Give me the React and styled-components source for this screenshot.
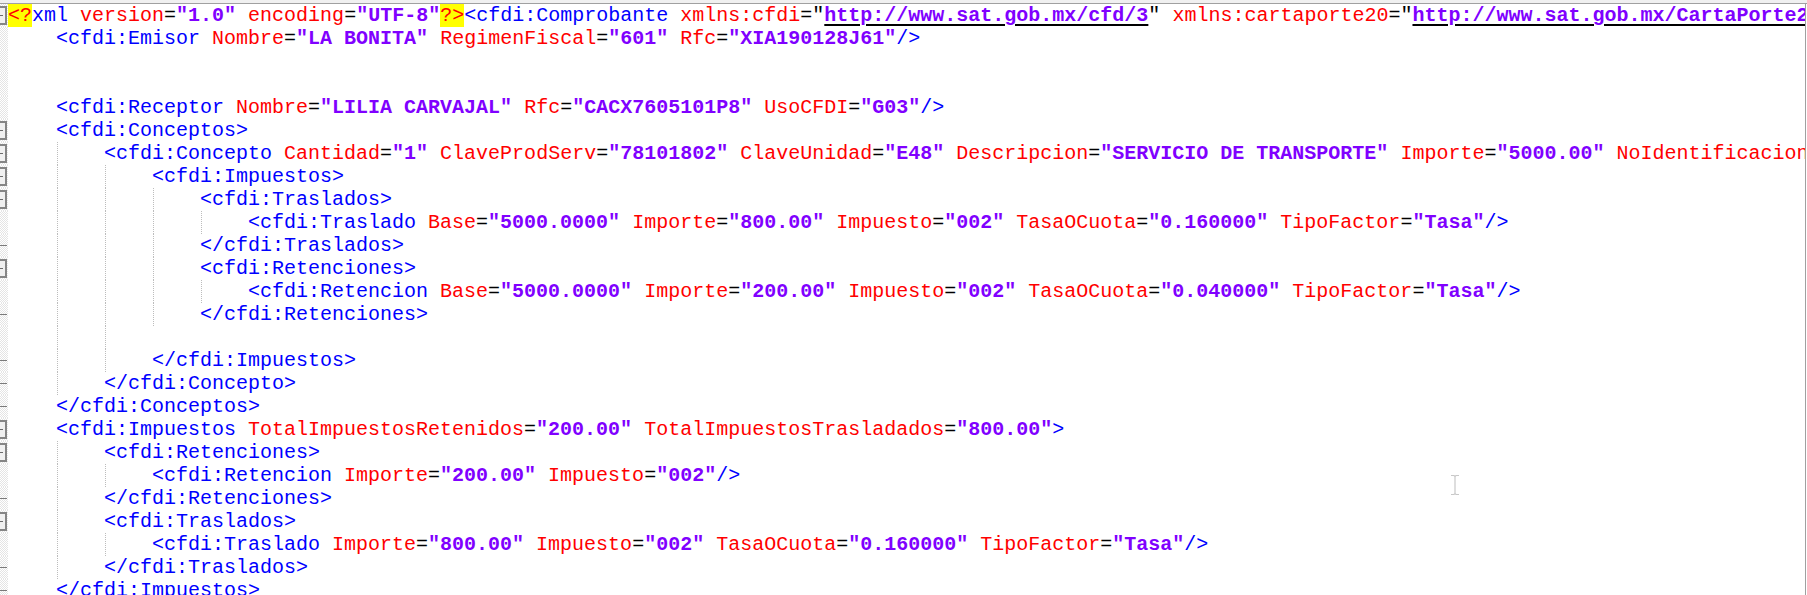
import React from "react";
import styled, { createGlobalStyle } from "styled-components";

const Global = createGlobalStyle`
  html, body { margin: 0; padding: 0; background: #ffffff; overflow: hidden; }
  body { width: 1807px; height: 595px; }
`;

const Window = styled.div`
  position: relative;
  width: 1807px;
  height: 595px;
  overflow: hidden;
  background: #ffffff;
  display: flex;
  flex-direction: column;
`;

const TopEdge = styled.div`
  height: 3px;
  flex: none;
  background: #f0f0f0;
  border-bottom: 1px solid #a0a0a0;
`;

const Editor = styled.div`
  flex: 1;
  width: 1806px;
  box-sizing: border-box;
  border-right: 1px solid #a0a0a0;
  overflow: hidden;
  display: flex;
  flex-direction: column;
`;

const Row = styled.div`
  display: flex;
  height: 23px;
  flex: none;
`;

const FoldCell = styled.div`
  position: relative;
  width: 8px;
  flex: none;
  overflow: hidden;
  background: repeating-conic-gradient(#e4e4e4 0% 25%, #ffffff 0% 50%) 0 0 / 2px 2px;
`;

const FoldBox = styled.div`
  position: absolute;
  left: -5px;
  top: 2px;
  width: 12px;
  height: 19px;
  box-sizing: border-box;
  border: 2px solid #858585;
  background: #f0f0f0;
  &::after {
    content: "";
    position: absolute;
    left: 0;
    right: 2px;
    top: 7px;
    height: 1px;
    background: #6a6a6a;
  }
`;

const FoldEnd = styled.div`
  position: absolute;
  left: 0;
  width: 7px;
  top: 11px;
  height: 1px;
  background: #7a7a7a;
`;

const Code = styled.div`
  flex: 1;
  overflow: hidden;
  white-space: pre;
  font-family: "Liberation Mono", "Courier New", monospace;
  font-size: 20px;
  line-height: 23px;
  color: #000000;
`;

const IndentUnit = styled.span`
  display: inline-block;
  width: 48px;
  height: 23px;
  vertical-align: top;
  background: ${(p) =>
    p.$guide
      ? "repeating-linear-gradient(to bottom, #bcbcbc 0 1px, transparent 1px 2px) 1px 0 / 1px 100% no-repeat"
      : "none"};
`;

const Tok = styled.span`
  color: ${(p) =>
    ({ tag: "#0000ff", attr: "#ff0000", eq: "#000000", val: "#8000ff", pi: "#ff0000", url: "#8000ff", q: "#000000" }[p.$t] ||
    "#000000")};
  font-weight: ${(p) => (p.$t === "val" || p.$t === "url" ? 700 : 400)};
  background: ${(p) => (p.$t === "pi" ? "#ffff00" : "transparent")};
  text-decoration: ${(p) => (p.$t === "url" ? "underline" : "none")};
  text-decoration-color: #000000;
  text-underline-offset: 3px;
  display: ${(p) => (p.$t === "pi" ? "inline-block" : "inline")};
  height: ${(p) => (p.$t === "pi" ? "23px" : "auto")};
  vertical-align: top;
`;

const Cursor = styled.svg`
  position: absolute;
  left: 1448px;
  top: 474px;
  pointer-events: none;
`;

// token helpers
const T = (t) => ["tag", t];
const A = (name, value) => [
  ["sp", " "],
  ["attr", name],
  ["eq", "="],
  ["val", `"${value}"`],
];
const U = (name, url) => [
  ["sp", " "],
  ["attr", name],
  ["eq", "="],
  ["q", '"'],
  ["url", url],
  ["q", '"'],
];

const lines = [
  {
    indent: 0, guides: [], fold: "box",
    toks: [
      ["pi", "<?"], T("xml"), ...A("version", "1.0"), ...A("encoding", "UTF-8"), ["pi", "?>"],
      T("<cfdi:Comprobante"), ...U("xmlns:cfdi", "http://www.sat.gob.mx/cfd/3"),
      ...U("xmlns:cartaporte20", "http://www.sat.gob.mx/CartaPorte20"),
      ...U("xmlns:xsi", "http://www.w3.org/2001/XMLSchema-instance"),
    ],
  },
  { indent: 1, guides: [], toks: [T("<cfdi:Emisor"), ...A("Nombre", "LA BONITA"), ...A("RegimenFiscal", "601"), ...A("Rfc", "XIA190128J61"), T("/>")] },
  { indent: 0, guides: [], toks: [] },
  { indent: 0, guides: [], toks: [] },
  { indent: 1, guides: [], toks: [T("<cfdi:Receptor"), ...A("Nombre", "LILIA CARVAJAL"), ...A("Rfc", "CACX7605101P8"), ...A("UsoCFDI", "G03"), T("/>")] },
  { indent: 1, guides: [], fold: "box", toks: [T("<cfdi:Conceptos>")] },
  {
    indent: 2, guides: [1], fold: "box",
    toks: [
      T("<cfdi:Concepto"), ...A("Cantidad", "1"), ...A("ClaveProdServ", "78101802"), ...A("ClaveUnidad", "E48"),
      ...A("Descripcion", "SERVICIO DE TRANSPORTE"), ...A("Importe", "5000.00"), ...A("NoIdentificacion", "01"),
      ...A("Unidad", "SERVICIO"), ...A("ValorUnitario", "5000.00"),
    ],
  },
  { indent: 3, guides: [1, 2], fold: "box", toks: [T("<cfdi:Impuestos>")] },
  { indent: 4, guides: [1, 2, 3], fold: "box", toks: [T("<cfdi:Traslados>")] },
  {
    indent: 5, guides: [1, 2, 3, 4],
    toks: [T("<cfdi:Traslado"), ...A("Base", "5000.0000"), ...A("Importe", "800.00"), ...A("Impuesto", "002"), ...A("TasaOCuota", "0.160000"), ...A("TipoFactor", "Tasa"), T("/>")],
  },
  { indent: 4, guides: [1, 2, 3], fold: "end", toks: [T("</cfdi:Traslados>")] },
  { indent: 4, guides: [1, 2, 3], fold: "box", toks: [T("<cfdi:Retenciones>")] },
  {
    indent: 5, guides: [1, 2, 3, 4],
    toks: [T("<cfdi:Retencion"), ...A("Base", "5000.0000"), ...A("Importe", "200.00"), ...A("Impuesto", "002"), ...A("TasaOCuota", "0.040000"), ...A("TipoFactor", "Tasa"), T("/>")],
  },
  { indent: 4, guides: [1, 2, 3], fold: "end", toks: [T("</cfdi:Retenciones>")] },
  { indent: 3, guides: [1, 2, 3], toks: [] },
  { indent: 3, guides: [1, 2], fold: "end", toks: [T("</cfdi:Impuestos>")] },
  { indent: 2, guides: [1], fold: "end", toks: [T("</cfdi:Concepto>")] },
  { indent: 1, guides: [], fold: "end", toks: [T("</cfdi:Conceptos>")] },
  {
    indent: 1, guides: [], fold: "box",
    toks: [T("<cfdi:Impuestos"), ...A("TotalImpuestosRetenidos", "200.00"), ...A("TotalImpuestosTrasladados", "800.00"), T(">")],
  },
  { indent: 2, guides: [1], fold: "box", toks: [T("<cfdi:Retenciones>")] },
  { indent: 3, guides: [1, 2], toks: [T("<cfdi:Retencion"), ...A("Importe", "200.00"), ...A("Impuesto", "002"), T("/>")] },
  { indent: 2, guides: [1], fold: "end", toks: [T("</cfdi:Retenciones>")] },
  { indent: 2, guides: [1], fold: "box", toks: [T("<cfdi:Traslados>")] },
  {
    indent: 3, guides: [1, 2],
    toks: [T("<cfdi:Traslado"), ...A("Importe", "800.00"), ...A("Impuesto", "002"), ...A("TasaOCuota", "0.160000"), ...A("TipoFactor", "Tasa"), T("/>")],
  },
  { indent: 2, guides: [1], fold: "end", toks: [T("</cfdi:Traslados>")] },
  { indent: 1, guides: [], fold: "end", toks: [T("</cfdi:Impuestos>")] },
];

function Line({ line }) {
  const units = [];
  for (let i = 0; i < line.indent; i++) {
    units.push(<IndentUnit key={"i" + i} $guide={line.guides.includes(i)} />);
  }
  return (
    <Row>
      <FoldCell>
        {line.fold === "box" && <FoldBox />}
        {line.fold === "end" && <FoldEnd />}
      </FoldCell>
      <Code>
        {units}
        {line.toks.map(([t, s], i) => (
          <Tok key={i} $t={t}>
            {s}
          </Tok>
        ))}
      </Code>
    </Row>
  );
}

export default function App() {
  return (
    <>
      <Global />
      <Window>
        <TopEdge />
        <Editor>
          {lines.map((l, i) => (
            <Line key={i} line={l} />
          ))}
        </Editor>
        <Cursor width="14" height="22" viewBox="0 0 14 22">
          <path
            d="M3 1.5h3l1 1 1-1h3M7 2.5v17M3 20.5h3l1-1 1 1h3"
            fill="none"
            stroke="#c8c8c8"
            strokeWidth="1.2"
          />
        </Cursor>
      </Window>
    </>
  );
}
